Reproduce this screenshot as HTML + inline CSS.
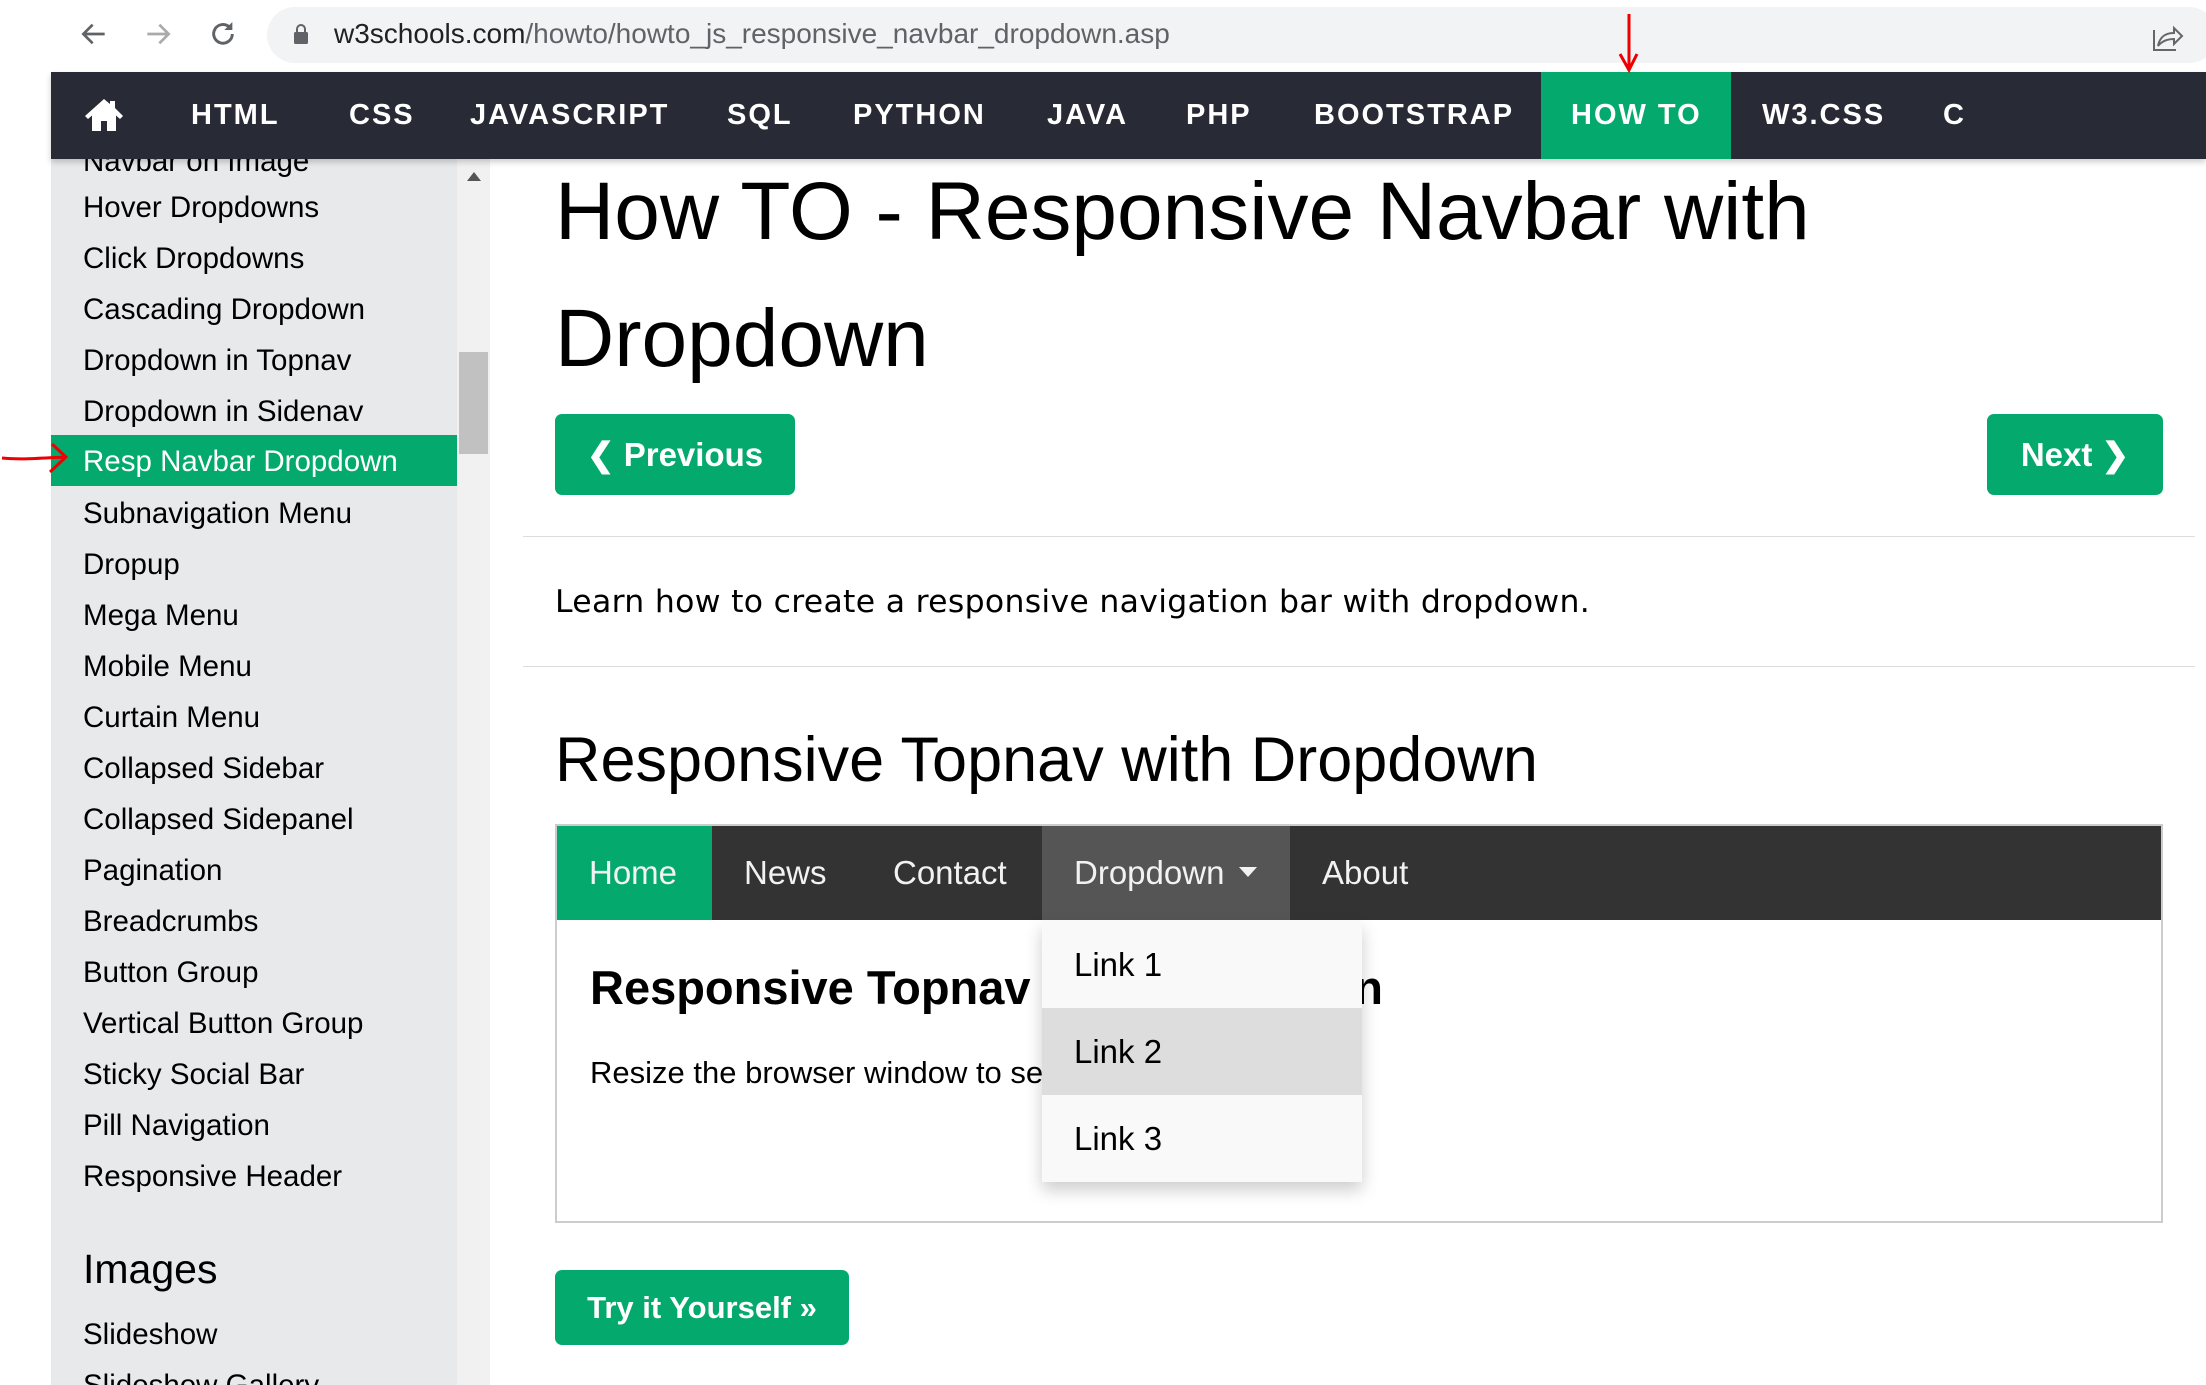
<!DOCTYPE html>
<html><head><meta charset="utf-8"><style>
*{margin:0;padding:0;box-sizing:border-box}
body{width:2206px;height:1385px;overflow:hidden;background:#fff;font-family:"Liberation Sans",sans-serif;position:relative;color:#000}
.a{position:absolute;white-space:nowrap}
.nav{position:absolute;left:51px;top:72px;width:2155px;height:87px;background:#282A35;box-shadow:0 3px 6px rgba(0,0,0,.2);z-index:3}
.nav span{position:absolute;top:0;line-height:87px;color:#fff;font-weight:bold;font-size:29px;letter-spacing:2px}
.side{position:absolute;left:51px;top:159px;width:406px;height:1226px;background:#E7E9EB;overflow:hidden}
.side div{position:absolute;left:32px;font-size:29.5px;color:#000;line-height:51px}
.btn{position:absolute;background:#04AA6D;color:#fff;border-radius:7px;font-weight:bold;font-size:33px;text-align:center}
.dn span{position:absolute;top:0;line-height:94px;color:#f2f2f2;font-size:33px}
</style></head><body>
<svg class="a" style="left:78px;top:18px" width="32" height="32" viewBox="0 0 24 24"><path d="M20 12H5M11 5l-7 7 7 7" fill="none" stroke="#5f6368" stroke-width="2"/></svg>
<svg class="a" style="left:142px;top:18px" width="32" height="32" viewBox="0 0 24 24"><path d="M4 12h15M13 5l7 7-7 7" fill="none" stroke="#aaa" stroke-width="2"/></svg>
<svg class="a" style="left:207px;top:18px" width="32" height="32" viewBox="0 0 24 24"><path d="M19 12a7 7 0 1 1-2-5" fill="none" stroke="#5f6368" stroke-width="2.2"/><path d="M19 3v6h-6z" fill="#5f6368"/></svg>
<div class="a" style="left:267px;top:7px;width:1950px;height:56px;background:#f1f3f4;border-radius:28px"></div>
<svg class="a" style="left:293px;top:23px" width="16" height="22" viewBox="0 0 16 22"><rect x="1" y="9" width="14" height="12" rx="1.5" fill="#5f6368"/><path d="M4 9V6a4 4 0 0 1 8 0v3" fill="none" stroke="#5f6368" stroke-width="2"/></svg>
<div class="a" style="left:334px;top:14px;font-size:28px;line-height:40px;color:#202124">w3schools.com<span style="color:#5f6368">/howto/howto_js_responsive_navbar_dropdown.asp</span></div>
<svg class="a" style="left:2152px;top:22px" width="32" height="30" viewBox="0 0 32 30"><path d="M2 8v20h22" fill="none" stroke="#666" stroke-width="2"/><path d="M6 24c2-10 8-13 16-13V6l8 8-8 8v-5c-7 0-12 2-16 7z" fill="none" stroke="#666" stroke-width="2"/></svg>
<div class="nav">
<svg style="position:absolute;left:32px;top:25px" width="42" height="36" viewBox="0 0 42 36"><path d="M21 2 2 19l3 3 4-3.5V34h9V24h6v10h9V18.5l4 3.5 3-3L32 11V4h-5v3z" fill="#fff"/></svg>
<span style="left:140px">HTML</span><span style="left:298px">CSS</span><span style="left:419px">JAVASCRIPT</span><span style="left:676px">SQL</span><span style="left:802px">PYTHON</span><span style="left:996px">JAVA</span><span style="left:1135px">PHP</span><span style="left:1263px">BOOTSTRAP</span>
<div style="position:absolute;left:1490px;top:0;width:190px;height:87px;background:#04AA6D"></div>
<span style="left:1520px">HOW TO</span><span style="left:1711px">W3.CSS</span><span style="left:1892px">C</span>
</div>
<svg class="a" style="left:1610px;top:10px;z-index:5" width="40" height="64" viewBox="0 0 40 64"><path d="M19 4v56M10 44l9 16 8-16" fill="none" stroke="#e00" stroke-width="3"/></svg>
<svg class="a" style="left:0;top:440px;z-index:5" width="72" height="36" viewBox="0 0 72 36"><path d="M2 18c20 2 40 0 64-1M52 4l14 13-16 15" fill="none" stroke="#e00" stroke-width="3"/></svg>
<div class="side">
<div style="top:-23px">Navbar on Image</div>
<div style="top:23px">Hover Dropdowns</div>
<div style="top:74px">Click Dropdowns</div>
<div style="top:125px">Cascading Dropdown</div>
<div style="top:176px">Dropdown in Topnav</div>
<div style="top:227px">Dropdown in Sidenav</div>
<div style="left:0;top:276px;width:406px;height:51px;background:#04AA6D"></div>
<div style="top:277px;color:#fff">Resp Navbar Dropdown</div>
<div style="top:329px">Subnavigation Menu</div>
<div style="top:380px">Dropup</div>
<div style="top:431px">Mega Menu</div>
<div style="top:482px">Mobile Menu</div>
<div style="top:533px">Curtain Menu</div>
<div style="top:584px">Collapsed Sidebar</div>
<div style="top:635px">Collapsed Sidepanel</div>
<div style="top:686px">Pagination</div>
<div style="top:737px">Breadcrumbs</div>
<div style="top:788px">Button Group</div>
<div style="top:839px">Vertical Button Group</div>
<div style="top:890px">Sticky Social Bar</div>
<div style="top:941px">Pill Navigation</div>
<div style="top:992px">Responsive Header</div>
<div style="top:1082px;font-size:41px;line-height:56px">Images</div>
<div style="top:1150px">Slideshow</div>
<div style="top:1201px">Slideshow Gallery</div>
</div>
<div class="a" style="left:457px;top:159px;width:33px;height:1226px;background:#f1f1f1"></div>
<div class="a" style="left:467px;top:172px;width:0;height:0;border-left:7px solid transparent;border-right:7px solid transparent;border-bottom:9px solid #555"></div>
<div class="a" style="left:459px;top:352px;width:29px;height:102px;background:#c1c1c1"></div>
<div class="a" style="left:555px;top:148px;font-size:82px;line-height:127px">How TO - Responsive Navbar with</div>
<div class="a" style="left:555px;top:275px;font-size:82px;line-height:127px">Dropdown</div>
<div class="btn" style="left:555px;top:414px;width:240px;height:81px;line-height:81px">&#10094; Previous</div>
<div class="btn" style="left:1987px;top:414px;width:176px;height:81px;line-height:81px">Next &#10095;</div>
<div class="a" style="left:523px;top:536px;width:1672px;height:1px;background:#ddd"></div>
<div class="a" style="left:555px;top:582px;font-size:31.5px;line-height:40px;font-family:'DejaVu Sans',sans-serif;letter-spacing:0.3px">Learn how to create a responsive navigation bar with dropdown.</div>
<div class="a" style="left:523px;top:666px;width:1672px;height:1px;background:#ddd"></div>
<div class="a" style="left:555px;top:720px;font-size:63px;line-height:80px">Responsive Topnav with Dropdown</div>
<div class="a" style="left:555px;top:824px;width:1608px;height:399px;border:2px solid #ccc"></div>
<div class="a dn" style="left:557px;top:826px;width:1604px;height:94px;background:#333">
<div style="position:absolute;left:0;top:0;width:155px;height:94px;background:#04AA6D"></div>
<span style="left:32px">Home</span><span style="left:187px">News</span><span style="left:336px">Contact</span>
<div style="position:absolute;left:485px;top:0;width:248px;height:94px;background:#555"></div>
<span style="left:517px">Dropdown</span>
<div style="position:absolute;left:682px;top:41px;border-left:9px solid transparent;border-right:9px solid transparent;border-top:10px solid #f2f2f2"></div>
<span style="left:765px">About</span>
</div>
<div class="a" style="left:590px;top:958px;font-size:47px;font-weight:bold;line-height:60px">Responsive Topnav with Dropdown</div>
<div class="a" style="left:590px;top:1053px;font-size:31px;line-height:40px">Resize the browser window to see how it works.</div>
<div class="a" style="left:1042px;top:921px;width:320px;height:261px;background:#f9f9f9;box-shadow:0 8px 16px rgba(0,0,0,.2);font-size:33px">
<div style="height:87px;line-height:87px;padding-left:32px">Link 1</div>
<div style="height:87px;line-height:87px;padding-left:32px;background:#ddd">Link 2</div>
<div style="height:87px;line-height:87px;padding-left:32px">Link 3</div>
</div>
<div class="btn" style="left:555px;top:1270px;width:294px;height:75px;line-height:75px;font-size:31px">Try it Yourself &raquo;</div>
</body></html>
